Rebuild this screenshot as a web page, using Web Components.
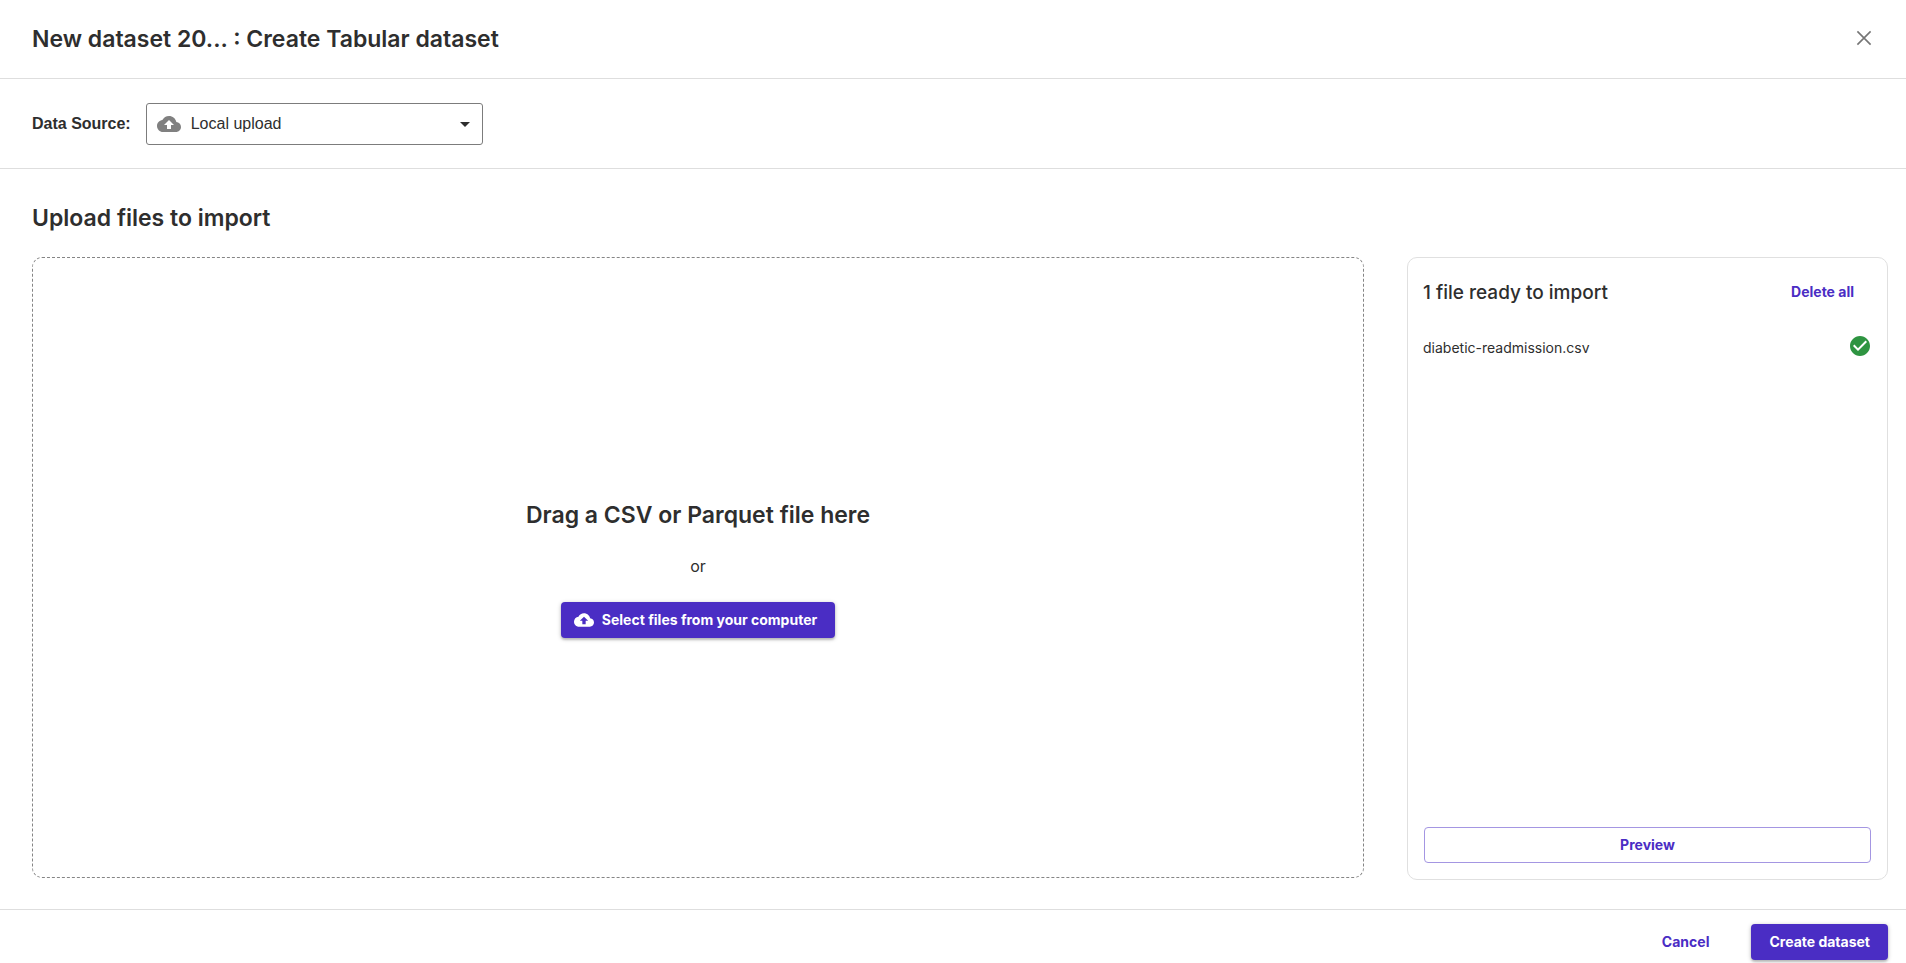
<!DOCTYPE html>
<html lang="en">
<head>
<meta charset="utf-8">
<title>Create Tabular dataset</title>
<style>
  html, body { height: 100%; margin: 0; }
  body {
    background: #fff;
    color: #2e2e2e;
    font-family: Inter, "Liberation Sans", sans-serif;
    font-size: 16px;
    line-height: 24px;
    --brand: #4a2dc4;
    --line: #dedede;
  }
</style>
</head>
<body>
<dataset-wizard>
  <wizard-header slot="header"><span>New dataset 20...</span> : Create Tabular dataset</wizard-header>
  <source-bar slot="source"></source-bar>
  <file-dropzone slot="drop"></file-dropzone>
  <import-panel slot="panel" heading="1 file ready to import">
    <file-row>diabetic-readmission.csv</file-row>
  </import-panel>
  <ui-button slot="actions" variant="text">Cancel</ui-button>
  <ui-button slot="actions" variant="filled">Create dataset</ui-button>
</dataset-wizard>

<script>
const define = (name, html, setup) => {
  const template = document.createElement('template');
  template.innerHTML = html;
  customElements.define(name, class extends HTMLElement {
    constructor() {
      super();
      this.attachShadow({ mode: 'open' }).append(template.content.cloneNode(true));
    }
    connectedCallback() { if (setup) setup(this, this.shadowRoot); }
  });
};

const ICONS = {
  cloud: '<path fill="currentColor" d="M19.35 10.04C18.67 6.59 15.64 4 12 4 9.11 4 6.6 5.64 5.35 8.04 2.34 8.36 0 10.91 0 14c0 3.31 2.69 6 6 6h13c2.76 0 5-2.24 5-5 0-2.64-2.05-4.78-4.65-4.96zM14 13v4h-4v-4H7l5-5 5 5h-3z"/>',
  close: '<path fill="none" stroke="currentColor" stroke-width="1.6" d="M5.4 5.4 18.6 18.6M18.6 5.4 5.4 18.6"/>',
  check: '<path fill="currentColor" d="M12 2C6.48 2 2 6.48 2 12s4.48 10 10 10 10-4.48 10-10S17.52 2 12 2zm-2 15-5-5 1.41-1.41L10 14.17l7.59-7.59L19 8l-9 9z"/>',
  down: '<path fill="currentColor" d="m7 10 5 5 5-5z"/>'
};

define('ui-icon', `
  <style>
    :host { display: block; flex: none; width: 24px; height: 24px; }
    :host([size="small"]) { width: 20px; height: 20px; }
    svg { display: block; width: 100%; height: 100%; }
  </style>
  <svg viewBox="0 0 24 24" aria-hidden="true"></svg>`,
  (el, root) => { root.querySelector('svg').innerHTML = ICONS[el.getAttribute('name')]; });

define('ui-button', `
  <style>
    :host { display: block; }
    button {
      box-sizing: border-box;
      display: flex; align-items: center; justify-content: center; gap: 8px;
      width: 100%; height: 36px; margin: 0; padding: 0 17px;
      border: 1px solid transparent; border-radius: 4px;
      background: none; color: var(--brand);
      font: 700 14px/24px Inter, "Liberation Sans", sans-serif;
      white-space: nowrap; cursor: pointer;
    }
    :host([variant="filled"]) button {
      background: var(--brand); color: #fff;
      box-shadow: 0 1px 4px rgba(0,0,0,.25), 0 2px 2px rgba(0,0,0,.14);
    }
    :host([variant="outlined"]) button { border-color: #a496e2; }
    ::slotted(ui-icon) { margin-left: -5px; }
  </style>
  <button type="button"><slot name="icon"></slot><span><slot></slot></span></button>`);

define('wizard-header', `
  <style>
    :host { display: block; border-bottom: 1px solid var(--line); }
    header {
      display: flex; align-items: flex-start; justify-content: space-between;
      padding: 23px 30px 23px 32px;
    }
    h1 { margin: 0; font-size: 23px; line-height: 32px; font-weight: 600; }
    button {
      display: block; margin-top: 3px; padding: 0; border: 0;
      background: none; color: #757575; cursor: pointer;
    }
  </style>
  <header>
    <h1><slot></slot></h1>
    <button type="button" aria-label="Close"><ui-icon name="close"></ui-icon></button>
  </header>`);

define('source-bar', `
  <style>
    :host { display: block; border-bottom: 1px solid var(--line); font-family: "Liberation Sans", Arial, sans-serif; }
    .bar { display: flex; align-items: center; gap: 15px; padding: 24px 32px 23px; }
    label { font-weight: 700; }
    .field { display: grid; align-items: center; width: 337px; }
    .field > * { grid-area: 1 / 1; }
    ui-icon { pointer-events: none; margin-left: 11px; color: #808080; }
    ui-icon[name="down"] { justify-self: end; margin-right: 6px; color: #2e2e2e; }
    select {
      appearance: none; box-sizing: border-box; width: 100%; height: 42px; margin: 0;
      padding: 0 40px 0 44px; border: 1px solid #7c7c7c; border-radius: 3px;
      background: #fff; color: #2e2e2e; font: inherit;
    }
  </style>
  <div class="bar">
    <label for="source">Data Source:</label>
    <div class="field">
      <select id="source"><option>Local upload</option></select>
      <ui-icon name="cloud"></ui-icon>
      <ui-icon name="down"></ui-icon>
    </div>
  </div>`);

define('file-dropzone', `
  <style>
    :host {
      box-sizing: border-box; display: flex; flex-direction: column;
      align-items: center; justify-content: center; padding-top: 1px;
      border: 1px dashed #858585; border-radius: 10px;
    }
    h2 { margin: 0; font-size: 23px; line-height: 32px; font-weight: 600; }
    p { margin: 23px 0 24px; }
  </style>
  <h2>Drag a CSV or Parquet file here</h2>
  <p>or</p>
  <ui-button variant="filled"><ui-icon slot="icon" name="cloud" size="small"></ui-icon>Select files from your computer</ui-button>`);

define('file-row', `
  <style>
    :host { display: flex; align-items: flex-start; justify-content: space-between; font-size: 14px; }
    span { padding-top: 2px; }
    ui-icon { color: #2e9441; }
  </style>
  <span><slot></slot></span><ui-icon name="check"></ui-icon>`);

define('import-panel', `
  <style>
    :host {
      box-sizing: border-box; display: flex; flex-direction: column;
      padding: 16px 15px; border: 1px solid #e0e0e0; border-radius: 10px;
    }
    .top { display: flex; align-items: flex-end; justify-content: space-between; }
    h3 { margin: 0; font-size: 19px; line-height: 34px; font-weight: 500; }
    .files { flex: 1; padding-top: 24px; }
    ui-button[variant="outlined"] { margin: 0 1px; }
  </style>
  <div class="top"><h3></h3><ui-button variant="text">Delete all</ui-button></div>
  <div class="files"><slot></slot></div>
  <ui-button variant="outlined">Preview</ui-button>`,
  (el, root) => { root.querySelector('h3').textContent = el.getAttribute('heading'); });

define('dataset-wizard', `
  <style>
    :host { display: flex; flex-direction: column; min-height: 100vh; }
    main { flex: 1; display: flex; flex-direction: column; padding: 33px 18px 29px 32px; }
    h2 { margin: 0 0 23px; font-size: 23px; line-height: 32px; font-weight: 600; }
    .columns { flex: 1; display: grid; grid-template-columns: minmax(0, 1fr) 481px; gap: 43px; }
    ::slotted(file-dropzone) { margin-bottom: 2px; }
    footer {
      display: flex; justify-content: flex-end; gap: 24px;
      padding: 14px 18px 3px; border-top: 1px solid var(--line);
    }
  </style>
  <slot name="header"></slot>
  <slot name="source"></slot>
  <main>
    <h2>Upload files to import</h2>
    <div class="columns"><slot name="drop"></slot><slot name="panel"></slot></div>
  </main>
  <footer><slot name="actions"></slot></footer>`);
</script>
</body>
</html>
